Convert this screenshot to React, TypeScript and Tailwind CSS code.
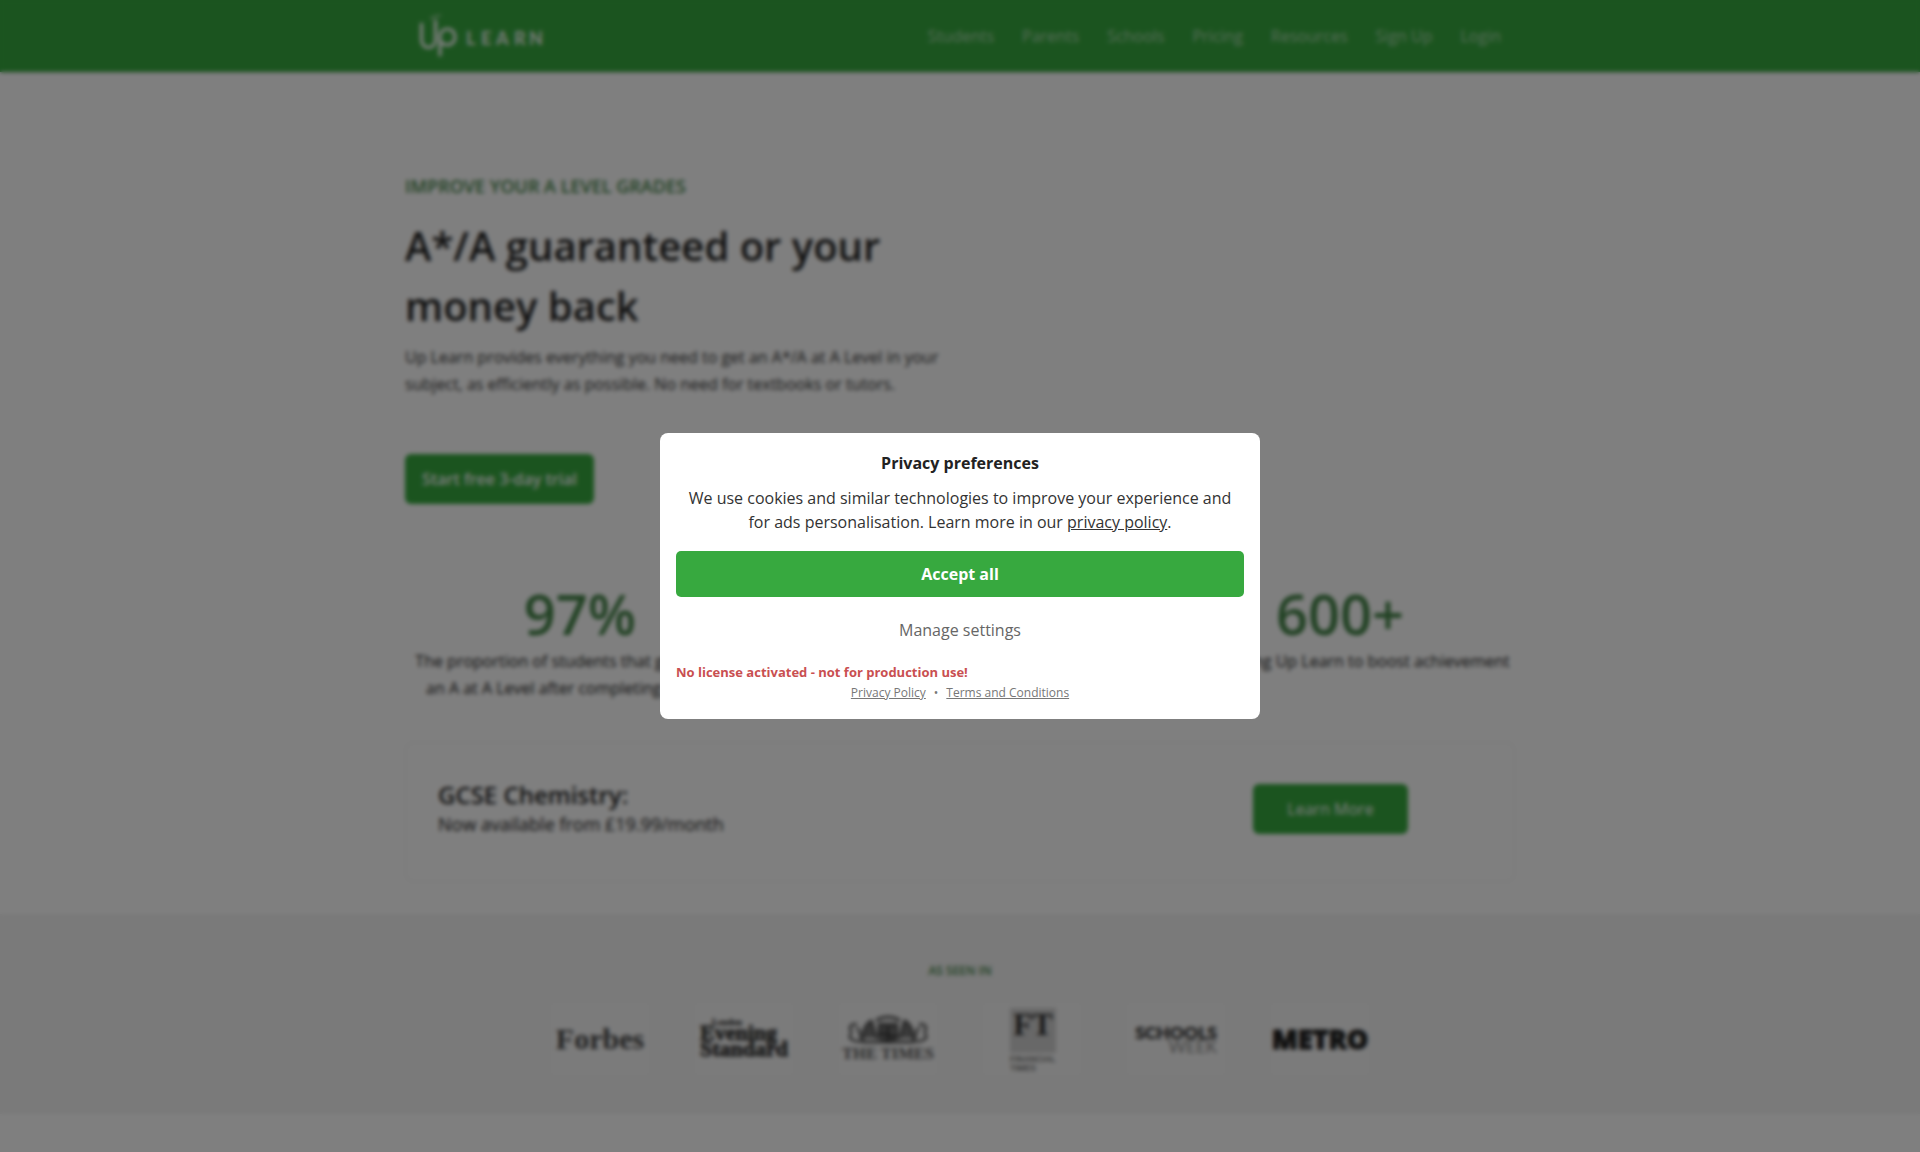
import React from 'react';
import clsx from 'clsx';

const navItems = ['Students', 'Parents', 'Schools', 'Pricing', 'Resources', 'Sign Up', 'Login'];

const stats = [
  {
    value: '97%',
    label: 'The proportion of students that get an A* or an A at A Level after completing Up Learn',
    column: 'col-start-1',
  },
  { value: '600+', label: 'Schools using Up Learn to boost achievement', column: 'col-start-3' },
];

function Logo() {
  return (
    <svg width="130" height="48" viewBox="0 0 130 48" fill="none" aria-label="Up Learn">
      <path
        d="M4.500 12v15.500c0 5 3 8 7 8s7-3 7-8V9"
        stroke="white"
        strokeWidth="3.200"
        strokeLinecap="round"
      />
      <path d="M14 6.500l4-2 5-1" stroke="white" strokeOpacity="0.5" strokeWidth="2" strokeLinecap="round" />
      <path
        d="M23 43V25c0-5 3-8 7.500-8s7.500 3.500 7.500 8-3 8-7.500 8c-2.500 0-4.500-1-6-2.500"
        stroke="white"
        strokeWidth="3.200"
        strokeLinecap="round"
      />
      <text
        x="49 64 79 97 112"
        y="33"
        fill="white"
        fillOpacity="0.9"
        fontFamily="Lato, sans-serif"
        fontWeight="900"
        fontSize="18"
      >
        LEARN
      </text>
    </svg>
  );
}

function GreenButton({ children, className }: { children: React.ReactNode; className?: string }) {
  return (
    <button className={clsx('h-[50px] rounded-md bg-[#37a93f] text-base text-white', className)}>
      {children}
    </button>
  );
}

function ForbesLogo() {
  return (
    <svg viewBox="0 0 98 72" className="h-[72px] w-[98px] bg-[#f7f7f7]" aria-label="Forbes">
      <text x="49" y="46" textAnchor="middle" fontFamily="Liberation Serif, serif" fontWeight="700" fontSize="30" fill="#444">
        Forbes
      </text>
    </svg>
  );
}

function EveningStandardLogo() {
  return (
    <svg viewBox="0 0 98 72" className="h-[72px] w-[98px] bg-[#f7f7f7]" aria-label="London Evening Standard">
      <g fontFamily="Liberation Serif, serif" fontWeight="700" fill="#333" stroke="#333">
        <text x="17" y="22" fontSize="9" strokeWidth="0.3">London</text>
        <text x="5" y="37" fontSize="22" strokeWidth="0.8">Evening</text>
        <text x="5" y="53" fontSize="22" strokeWidth="0.8">Standard</text>
      </g>
    </svg>
  );
}

function TimesLogo() {
  return (
    <svg viewBox="0 0 98 72" className="h-[72px] w-[98px] bg-[#f7f7f7]" aria-label="The Times">
      <g stroke="#555" strokeWidth="2.500" fill="none" strokeLinecap="round">
        <path d="M17 21c-6 0-7 4-5 7s-4 5 0 8 7 3 12 2" />
        <path d="M81 21c6 0 7 4 5 7s4 5 0 8-7 3-12 2" />
        <path d="M18 25c5 3 1 8 5 11M80 25c-5 3-1 8-5 11" />
        <path d="M24 35c0-8 3-14 8-17 4 5 1 10 6 17" fill="#777" strokeWidth="3" />
        <path d="M74 35c0-8-3-14-8-17-4 5-1 10-6 17" fill="#777" strokeWidth="3" />
        <path d="M24 39h50" strokeWidth="3" />
        <path d="M38 17c6-4 16-4 22 0M40 21h18" strokeWidth="3" />
        <path d="M40 24h18v7c0 5-5 7-9 8-4-1-9-3-9-8z" strokeWidth="3" fill="#777" />
        <path d="M49 25v13M41 30l16 4" stroke="#333" />
      </g>
      <text x="49" y="56" textAnchor="middle" fontFamily="Liberation Serif, serif" fontWeight="700" fontSize="16.500" fill="#555">
        THE TIMES
      </text>
    </svg>
  );
}

function FtLogo() {
  return (
    <svg viewBox="0 0 98 72" className="h-[72px] w-[98px] bg-[#f7f7f7]" aria-label="Financial Times">
      <rect x="27" y="5" width="46" height="45" fill="#d0d0d0" />
      <text x="50" y="32" textAnchor="middle" fontFamily="Liberation Serif, serif" fontWeight="700" fontSize="31" fill="#333">
        FT
      </text>
      <g fontFamily="Liberation Sans, sans-serif" fontWeight="700" fontSize="8.500" fill="#777">
        <text x="27" y="59">FINANCIAL</text>
        <text x="27" y="68">TIMES</text>
      </g>
    </svg>
  );
}

function SchoolsWeekLogo() {
  return (
    <svg viewBox="0 0 98 72" className="h-[72px] w-[98px] bg-[#f7f7f7]" aria-label="Schools Week">
      <text
        x="90"
        y="36"
        textAnchor="end"
        fontFamily="Lato, sans-serif"
        fontWeight="900"
        fontSize="17.500"
        fill="#444"
        stroke="#444"
        strokeWidth="0.500"
      >
        SCHOOLS
      </text>
      <text x="90" y="50" textAnchor="end" fontFamily="Lato, sans-serif" fontWeight="400" fontSize="17" fill="#888">
        WEEK
      </text>
    </svg>
  );
}

function MetroLogo() {
  return (
    <svg viewBox="0 0 98 72" className="h-[72px] w-[98px] bg-[#f7f7f7]" aria-label="Metro">
      <text
        x="49"
        y="46"
        textAnchor="middle"
        fontFamily="Open Sans, sans-serif"
        fontWeight="800"
        fontSize="27"
        fill="#222"
        stroke="#222"
        strokeWidth="1"
      >
        METRO
      </text>
    </svg>
  );
}

function Header() {
  return (
    <header className="relative bg-[#37a93f] shadow-sm">
      <div className="mx-auto flex h-[72px] max-w-[1110px] items-center justify-between pr-[14px] pl-3">
        <a href="#home">
          <Logo />
        </a>
        <nav className="flex gap-7 text-base text-white/60">
          {navItems.map((item) => (
            <a key={item} href="#nav">
              {item}
            </a>
          ))}
        </nav>
      </div>
    </header>
  );
}

function PrivacyDialog() {
  return (
    <div className="fixed inset-0 flex items-center justify-center bg-black/50 backdrop-blur-[2px]">
      <div
        role="dialog"
        aria-labelledby="privacy-title"
        className="w-full max-w-[600px] rounded-lg bg-white px-4 pt-[18px] pb-[15px] text-center text-base text-[#333]"
      >
        <h2 id="privacy-title" className="font-bold text-[#222]">
          Privacy preferences
        </h2>
        <p className="mt-[11px] px-2">
          We use cookies and similar technologies to improve your experience and for ads personalisation. Learn
          more in our{' '}
          <a href="#privacy" className="underline">
            privacy policy
          </a>
          .
        </p>
        <button className="mt-[17px] h-[46px] w-full rounded-[5px] bg-[#37a93f] font-bold text-white">
          Accept all
        </button>
        <button className="mt-[10px] h-[46px] w-full text-[#666]">Manage settings</button>
        <p className="mt-[9px] text-left text-[13px] leading-5 font-bold text-[#c94f51]">
          No license activated - not for production use!
        </p>
        <div className="flex justify-center gap-2 text-xs leading-[22px] text-[#777]">
          <a href="#privacy" className="underline">
            Privacy Policy
          </a>
          <span>•</span>
          <a href="#terms" className="underline">
            Terms and Conditions
          </a>
        </div>
      </div>
    </div>
  );
}

export default function App() {
  return (
    <div className="min-h-screen bg-white font-['Open_Sans',sans-serif] text-[#222]">
      <Header />

      <main>
        <div className="mx-auto max-w-[1110px]">
          <section className="max-w-[540px] pt-[100px]">
            <p className="text-lg leading-7 font-semibold text-[#458549]">IMPROVE YOUR A LEVEL GRADES</p>
            <h1 className="mt-4 text-[40px] leading-[60px] font-semibold">A*/A guaranteed or your money back</h1>
            <p className="mt-2 text-base leading-[27px] text-[#333]">
              Up Learn provides everything you need to get an A*/A at A Level in your subject, as efficiently as
              possible. No need for textbooks or tutors.
            </p>
            <GreenButton className="mt-14 w-[189px] font-semibold">Start free 3-day trial</GreenButton>
          </section>

          <section className="-mx-[15px] mt-[75px] grid grid-cols-3 text-center">
            {stats.map((stat) => (
              <div key={stat.value} className={clsx('px-[15px]', stat.column)}>
                <p className="text-[56px] leading-[68px] font-semibold text-[#458549]">{stat.value}</p>
                <p className="mt-px text-base leading-[27px] text-[#222]">{stat.label}</p>
              </div>
            ))}
          </section>

          <section className="mt-10 flex h-[140px] items-start justify-between rounded-lg border border-[#eee] pr-[106px] pl-8">
            <div className="pt-9">
              <h2 className="text-2xl leading-8 font-semibold">GCSE Chemistry:</h2>
              <p className="text-lg leading-[27px] text-[#222]">Now available from £19.99/month</p>
            </div>
            <GreenButton className="mt-[41px] w-[155px]">Learn More</GreenButton>
          </section>
        </div>

        <section className="mt-8 bg-[#f4f4f4] pt-[47px] pb-[39px] text-center">
          <p className="text-xs leading-5 font-semibold text-[#458549]">AS SEEN IN</p>
          <div className="mt-[22px] flex justify-center gap-[46px]">
            <ForbesLogo />
            <EveningStandardLogo />
            <TimesLogo />
            <FtLogo />
            <SchoolsWeekLogo />
            <MetroLogo />
          </div>
        </section>
      </main>

      <PrivacyDialog />
    </div>
  );
}
